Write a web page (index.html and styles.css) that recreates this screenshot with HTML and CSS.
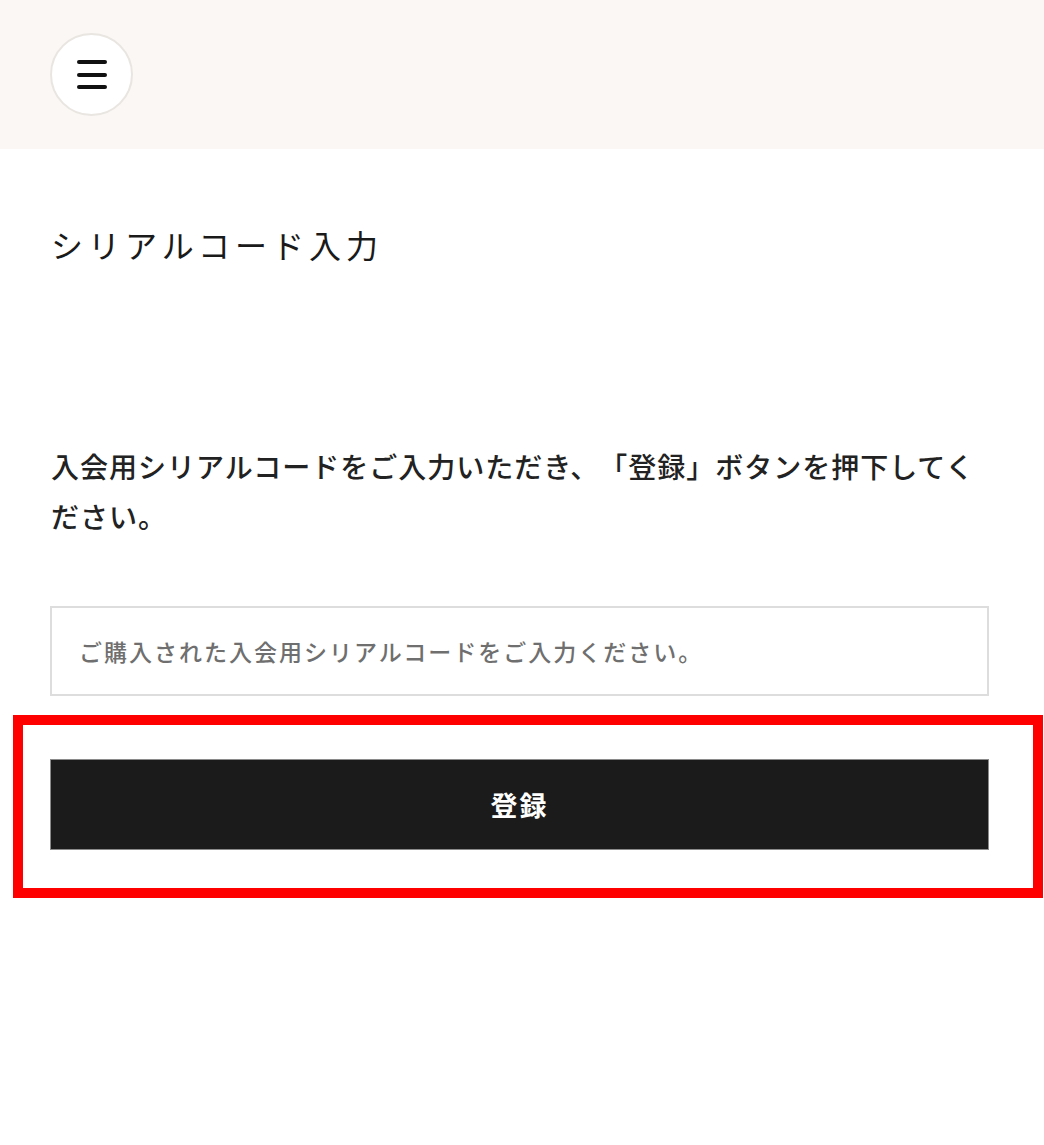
FILE: index.html
```html
<!DOCTYPE html>
<html lang="ja">
<head>
<meta charset="utf-8">
<title>シリアルコード入力</title>
<link rel="stylesheet" href="styles.css">
</head>
<body>
<header class="site-header">
  <button class="menu-btn" aria-label="メニュー">
    <span class="bar"></span><span class="bar"></span><span class="bar"></span>
  </button>
</header>
<main class="content">
  <h1 class="page-title">シリアルコード入力</h1>
  <p class="lead">入会用シリアルコードをご入力いただき、「登録」ボタンを押下してください。</p>
  <input class="serial-input" type="text" placeholder="ご購入された入会用シリアルコードをご入力ください。">
  <button class="submit-btn">登録</button>
</main>
<div class="highlight"></div>
</body>
</html>
```
FILE: styles.css
```css
html, body {
  margin: 0;
  padding: 0;
  background: #ffffff;
}
body {
  font-family: "Noto Sans CJK JP", "Noto Sans", sans-serif;
  color: #222222;
  position: relative;
  min-height: 1145px;
  text-spacing-trim: space-all;
}
.site-header {
  height: 149px;
  background: #faf7f4;
  padding: 33px 0 0 50px;
  box-sizing: border-box;
}
.menu-btn {
  width: 83px;
  height: 83px;
  border-radius: 50%;
  border: 2px solid #e9e5e1;
  background: #ffffff;
  padding: 0;
  display: flex;
  flex-direction: column;
  align-items: center;
  justify-content: center;
  gap: 8.5px;
  box-sizing: border-box;
}
.menu-btn .bar {
  display: block;
  width: 30px;
  height: 4px;
  border-radius: 2px;
  background: #111111;
}
.content {
  padding: 0 55px 0 50px;
  display: flex;
  flex-direction: column;
  align-items: stretch;
}
.page-title {
  margin: 72px 0 0 1px;
  font-size: 32px;
  font-weight: 400;
  line-height: 46px;
  letter-spacing: 5px;
  color: #1a1a1a;
  text-spacing-trim: space-all;
}
.lead {
  margin: 174px 0 0 1px;
  font-size: 28px;
  line-height: 50px;
  letter-spacing: 1px;
  font-weight: 500;
  color: #222222;
  text-spacing-trim: space-all;
}
.serial-input {
  margin-top: 65px;
  height: 90px;
  box-sizing: border-box;
  border: 2px solid #dddddd;
  padding: 0 0 0 27px;
  font-family: inherit;
  font-size: 23px;
  letter-spacing: 2px;
  color: #222222;
  background: #ffffff;
  outline: none;
  text-spacing-trim: space-all;
}
.serial-input::placeholder {
  color: #6f6f6f;
  font-weight: 500;
}
.submit-btn {
  margin-top: 63px;
  height: 91px;
  border: 1px solid #8a8a8a;
  background: #1b1b1b;
  color: #ffffff;
  font-family: inherit;
  font-size: 27px;
  font-weight: 700;
  letter-spacing: 2px;
  cursor: pointer;
}
.highlight {
  position: absolute;
  left: 13px;
  top: 715px;
  width: 1030px;
  height: 183px;
  box-sizing: border-box;
  border: 10px solid #ff0000;
  pointer-events: none;
}
```
